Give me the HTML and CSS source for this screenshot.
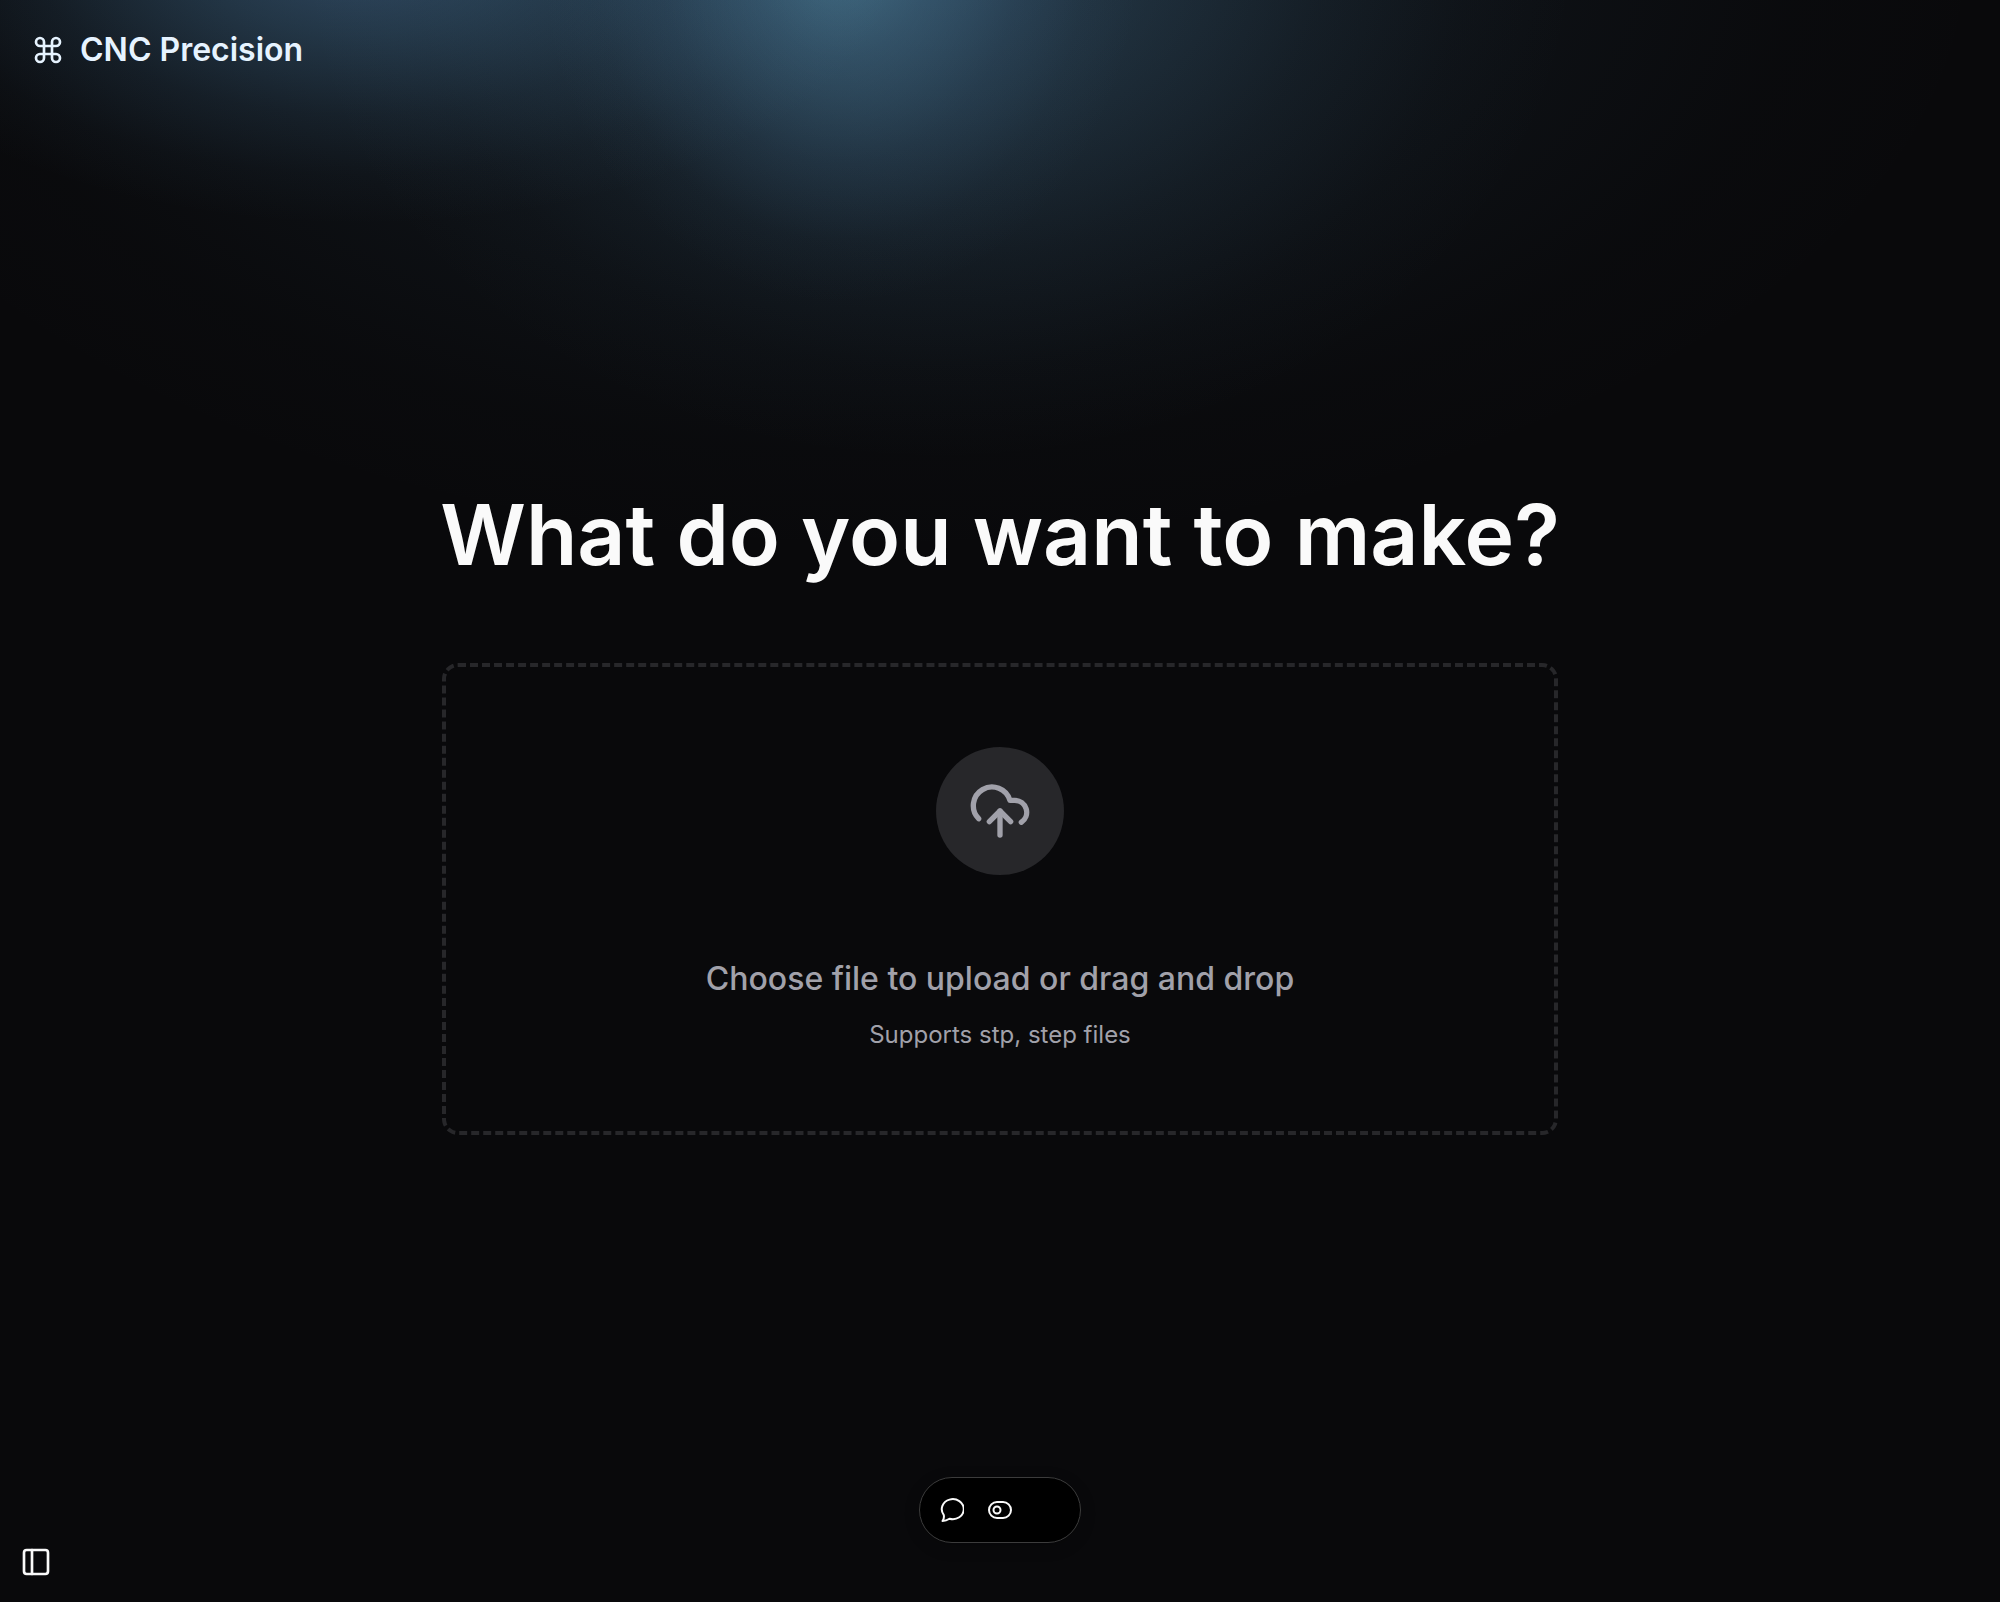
FILE: index.html
```html
<!DOCTYPE html>
<html lang="en">
<head>
  <meta charset="utf-8">
  <meta name="viewport" content="width=device-width, initial-scale=1">
  <title>CNC Precision</title>
  <link rel="stylesheet" href="styles.css">
</head>
<body class="page">
  <header class="header">
    <a class="brand" href="#">
      <svg class="icon" viewBox="0 0 24 24" aria-hidden="true"><path d="M15 6v12a3 3 0 1 0 3-3H6a3 3 0 1 0 3 3V6a3 3 0 1 0-3 3h12a3 3 0 1 0-3-3"/></svg>
      <span>CNC Precision</span>
    </a>
  </header>

  <main class="main">
    <h1 class="title">What do you want to make?</h1>
    <label class="dropzone" for="part-file">
      <input class="file-input" id="part-file" type="file" accept=".stp,.step">
      <span class="badge">
        <svg class="icon icon-large" viewBox="0 0 24 24" aria-hidden="true"><path d="M4 14.899A7 7 0 1 1 15.71 8h1.79a4.5 4.5 0 0 1 2.5 8.242"/><path d="M12 12v9"/><path d="m16 16-4-4-4 4"/></svg>
      </span>
      <span class="prompt">Choose file to upload or drag and drop</span>
      <span class="hint">Supports stp, step files</span>
    </label>
  </main>

  <footer class="footer">
    <button class="sidebar-toggle" type="button" aria-label="Toggle sidebar">
      <svg class="icon" viewBox="0 0 24 24" aria-hidden="true"><rect x="3" y="3" width="18" height="18" rx="2"/><path d="M9 3v18"/></svg>
    </button>
  </footer>

  <div class="toolbar" role="toolbar" aria-label="Page tools">
    <button class="tool" type="button" aria-label="Comment">
      <svg class="tool-icon" viewBox="0 0 24 24" aria-hidden="true"><path d="M2.500 23c1.300-1.900 1.800-3.900 1.200-6.200A11 10 0 1 1 9.500 20.700C7.500 22.100 5.100 23 2.500 23z"/></svg>
    </button>
    <button class="tool" type="button" aria-label="Flags">
      <svg class="tool-icon" viewBox="0 0 24 24" aria-hidden="true"><rect x="1" y="4" width="22" height="16" rx="8"/><circle cx="9" cy="12" r="3.500"/></svg>
    </button>
  </div>
</body>
</html>
```
FILE: styles.css
```css
* {
  box-sizing: border-box;
}

.page {
  display: grid;
  grid-template-rows: auto 1fr auto;
  min-height: 100vh;
  margin: 0;
  background:
    radial-gradient(ellipse 15% 22% at 42% -3%, rgb(104 176 210 / 42%), rgb(96 160 200 / 26%) 30%, rgb(84 140 184 / 12%) 60%, rgb(84 140 184 / 3%) 82%, transparent),
    radial-gradient(ellipse 27% 17% at 18% -3%, rgb(90 140 190 / 44%), rgb(84 140 184 / 30%) 30%, rgb(84 140 184 / 13%) 60%, rgb(84 140 184 / 4%) 82%, transparent),
    radial-gradient(ellipse 32% 32% at 47% -3%, rgb(88 144 188 / 28%), rgb(84 140 180 / 20%) 30%, rgb(84 140 180 / 8%) 60%, rgb(84 140 180 / 2%) 82%, transparent),
    radial-gradient(ellipse 56% 38% at 44% -3%, rgb(84 140 180 / 16%), rgb(84 140 180 / 11%) 30%, rgb(84 140 180 / 5%) 60%, rgb(84 140 180 / 1%) 82%, transparent),
    #09090b;
  color: #fafafa;
  font-family: Inter, "Liberation Sans", sans-serif;
}

.icon {
  display: block;
  width: 32px;
  height: 32px;
  fill: none;
  stroke: currentColor;
  stroke-width: 2;
  stroke-linecap: round;
  stroke-linejoin: round;
}

.icon-large {
  width: 64px;
  height: 64px;
}

.header {
  display: flex;
  align-items: center;
  height: 100px;
  padding: 0 32px;
}

.brand {
  display: flex;
  align-items: center;
  gap: 16px;
  color: #e6f3ff;
  font-size: 32px;
  font-weight: 600;
  line-height: 40px;
  text-decoration: none;
}

.main {
  display: flex;
  flex-direction: column;
  align-items: center;
  justify-content: center;
  gap: 80px;
  padding: 0 32px;
}

.title {
  margin: 0;
  font-size: 84px;
  font-weight: 600;
  line-height: 96px;
  text-align: center;
}

.dropzone {
  display: flex;
  flex-direction: column;
  align-items: center;
  width: 100%;
  max-width: 1116px;
  padding: 80px 32px;
  border: 4px dashed #27272a;
  border-radius: 16px;
  color: #a1a1aa;
  text-align: center;
  cursor: pointer;
}

.file-input {
  position: absolute;
  width: 1px;
  height: 1px;
  opacity: 0;
}

.badge {
  display: grid;
  place-items: center;
  width: 128px;
  height: 128px;
  margin-bottom: 80px;
  border-radius: 50%;
  background: #27272a;
}

.prompt {
  margin-bottom: 16px;
  font-size: 32px;
  font-weight: 500;
  line-height: 48px;
}

.hint {
  font-size: 24px;
  line-height: 32px;
}

.footer {
  display: flex;
  align-items: center;
  height: 80px;
  padding: 0 20px;
}

.sidebar-toggle,
.tool {
  padding: 0;
  border: 0;
  background: none;
  color: inherit;
  cursor: pointer;
}

.toolbar {
  position: fixed;
  bottom: 59px;
  left: 50%;
  display: grid;
  grid-template-columns: repeat(3, 48px);
  height: 66px;
  padding: 0 8px;
  border: 1px solid #3c3c3c;
  border-radius: 33px;
  background: #000;
  box-shadow: 0 4px 16px rgb(0 0 0 / 20%);
  transform: translateX(-50%);
}

.tool {
  display: grid;
  place-items: center;
}

.tool-icon {
  width: 24px;
  height: 24px;
  fill: none;
  stroke: currentColor;
  stroke-width: 2;
  stroke-linejoin: round;
}
```
